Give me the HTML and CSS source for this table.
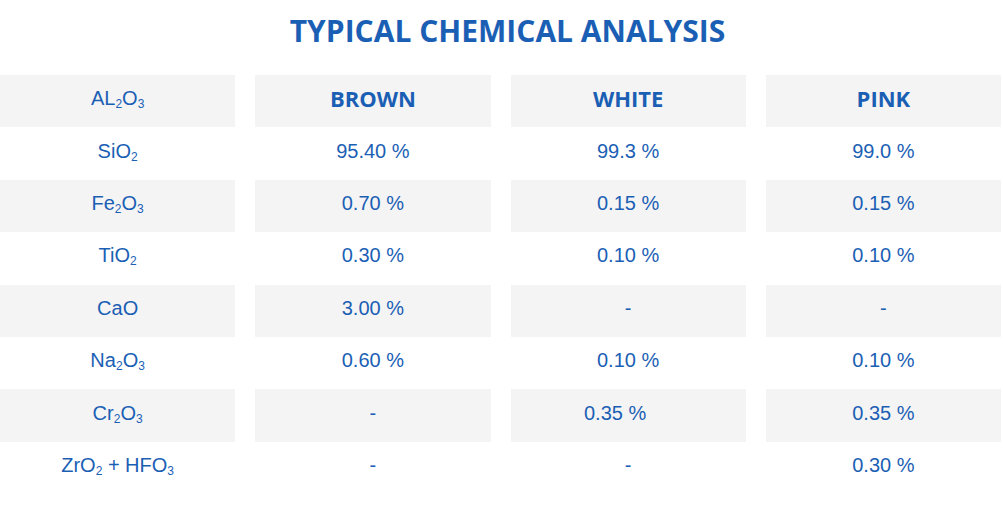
FILE: index.html
```html
<!DOCTYPE html>
<html lang="en">
<head>
<meta charset="utf-8">
<title>Typical Chemical Analysis</title>
<link rel="stylesheet" href="styles.css">
</head>
<body>
<section class="analysis">
  <h1 class="title">TYPICAL CHEMICAL ANALYSIS</h1>
  <div class="grid">
    <div class="row shade">
      <div class="cell"><span>AL<sub>2</sub>O<sub>3</sub></span></div>
      <div class="cell head"><span>BROWN</span></div>
      <div class="cell head"><span>WHITE</span></div>
      <div class="cell head"><span>PINK</span></div>
    </div>
    <div class="row">
      <div class="cell"><span>SiO<sub>2</sub></span></div>
      <div class="cell"><span>95.40 %</span></div>
      <div class="cell"><span>99.3 %</span></div>
      <div class="cell"><span>99.0 %</span></div>
    </div>
    <div class="row shade">
      <div class="cell"><span>Fe<sub>2</sub>O<sub>3</sub></span></div>
      <div class="cell"><span>0.70 %</span></div>
      <div class="cell"><span>0.15 %</span></div>
      <div class="cell"><span>0.15 %</span></div>
    </div>
    <div class="row">
      <div class="cell"><span>TiO<sub>2</sub></span></div>
      <div class="cell"><span>0.30 %</span></div>
      <div class="cell"><span>0.10 %</span></div>
      <div class="cell"><span>0.10 %</span></div>
    </div>
    <div class="row shade">
      <div class="cell"><span>CaO</span></div>
      <div class="cell"><span>3.00 %</span></div>
      <div class="cell"><span>-</span></div>
      <div class="cell"><span>-</span></div>
    </div>
    <div class="row">
      <div class="cell"><span>Na<sub>2</sub>O<sub>3</sub></span></div>
      <div class="cell"><span>0.60 %</span></div>
      <div class="cell"><span>0.10 %</span></div>
      <div class="cell"><span>0.10 %</span></div>
    </div>
    <div class="row shade">
      <div class="cell"><span>Cr<sub>2</sub>O<sub>3</sub></span></div>
      <div class="cell"><span>-</span></div>
      <div class="cell"><span class="shifted">0.35 %</span></div>
      <div class="cell"><span>0.35 %</span></div>
    </div>
    <div class="row">
      <div class="cell"><span>ZrO<sub>2</sub> + HFO<sub>3</sub></span></div>
      <div class="cell"><span>-</span></div>
      <div class="cell"><span>-</span></div>
      <div class="cell"><span>0.30 %</span></div>
    </div>
  </div>
</section>
</body>
</html>
```
FILE: styles.css
```css
html, body {
  margin: 0;
  padding: 0;
  background: #ffffff;
}

.analysis {
  width: 1001px;
  color: #1b5fb5;
}

.title {
  margin: 0;
  padding: 11px 0 0 14px;
  font-family: "Open Sans", sans-serif;
  font-weight: 700;
  font-size: 30px;
  line-height: 40px;
  text-align: center;
}

.grid {
  margin-top: 24px;
  display: flex;
  flex-direction: column;
}

.row {
  display: grid;
  grid-template-columns: repeat(4, 1fr);
  column-gap: 20px;
  height: 52.4px;
}

.cell {
  display: flex;
  align-items: center;
  justify-content: center;
  padding-bottom: 6px;
  box-sizing: border-box;
  font-family: "Liberation Sans", Arial, sans-serif;
  font-size: 20px;
  line-height: 20px;
}

.row.shade .cell {
  background: #f4f4f4;
}

.cell.head {
  font-family: "Open Sans", sans-serif;
  font-weight: 700;
  font-size: 22px;
}

sub {
  font-size: 12px;
  vertical-align: -3px;
  line-height: 0;
}

.shifted {
  padding-right: 26px;
}
```
